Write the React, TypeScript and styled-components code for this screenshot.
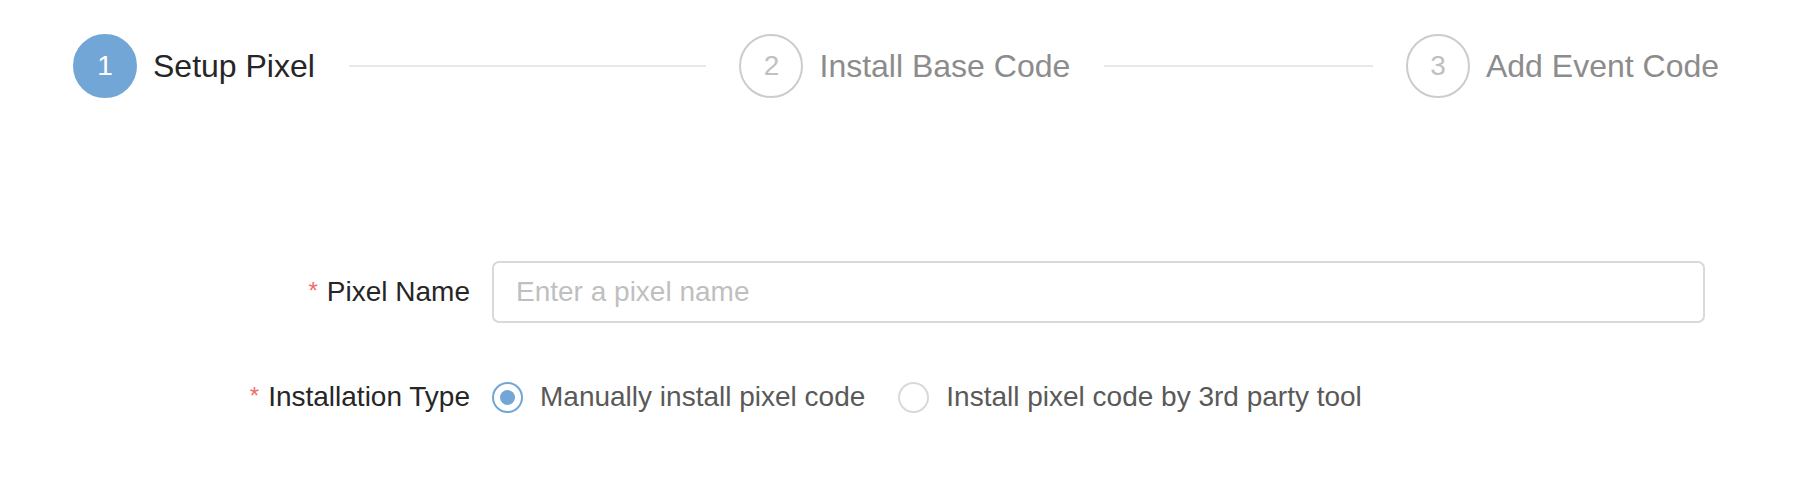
import styled, { createGlobalStyle } from "styled-components";

const GlobalStyle = createGlobalStyle`
  body {
    margin: 0;
    background: #ffffff;
    font-family: "Liberation Sans", Arial, Helvetica, sans-serif;
  }
  * {
    box-sizing: border-box;
  }
`;

const Page = styled.div`
  width: 1796px;
  height: 502px;
  background: #ffffff;
`;

const Steps = styled.div`
  display: flex;
  align-items: center;
  padding: 34px 77px 0 73px;
`;

const StepItem = styled.div<{ last?: boolean }>`
  display: flex;
  align-items: center;
  flex: ${(props) => (props.last ? "none" : "1")};
`;

const StepIcon = styled.div<{ active?: boolean }>`
  width: 64px;
  height: 64px;
  flex: none;
  border-radius: 50%;
  display: flex;
  align-items: center;
  justify-content: center;
  font-size: 28px;
  background: ${(props) => (props.active ? "#71a6d6" : "#ffffff")};
  border: 2px solid ${(props) => (props.active ? "#71a6d6" : "#cccccc")};
  color: ${(props) => (props.active ? "#ffffff" : "#c0c0c0")};
`;

const StepTitle = styled.div<{ active?: boolean }>`
  margin-left: 16px;
  font-size: 32px;
  white-space: nowrap;
  color: ${(props) => (props.active ? "#262626" : "#8c8c8c")};
`;

const StepLine = styled.div`
  flex: 1;
  height: 2px;
  margin: 0 33px 0 34px;
  background: #e8e8e8;
`;

const Form = styled.div`
  margin-top: 163px;
  display: flex;
  flex-direction: column;
  gap: 43px;
`;

const FormRow = styled.div`
  display: flex;
  align-items: center;
  min-height: 62px;
  gap: 22px;
`;

const Label = styled.div`
  width: 470px;
  text-align: right;
  font-size: 28px;
  color: #262626;
  white-space: nowrap;
`;

const Required = styled.span`
  color: #ee6b6e;
  font-size: 24px;
  margin-right: 9px;
  position: relative;
  top: -2px;
`;

const Input = styled.input`
  width: 1213px;
  height: 62px;
  border: 2px solid #d9d9d9;
  border-radius: 7px;
  padding: 0 22px;
  font-family: inherit;
  font-size: 28px;
  color: #262626;
  outline: none;

  &::placeholder {
    color: #bfbfbf;
  }
`;

const RadioGroup = styled.div`
  display: flex;
  align-items: center;
  gap: 33px;
`;

const RadioOption = styled.label`
  display: flex;
  align-items: center;
  gap: 17px;
  font-size: 28px;
  color: #595959;
  white-space: nowrap;
`;

const RadioCircle = styled.span<{ checked?: boolean }>`
  width: 31px;
  height: 31px;
  border-radius: 50%;
  border: 2px solid ${(props) => (props.checked ? "#71a6d6" : "#d9d9d9")};
  display: flex;
  align-items: center;
  justify-content: center;

  &::after {
    content: "";
    width: 15px;
    height: 15px;
    border-radius: 50%;
    background: ${(props) => (props.checked ? "#71a6d6" : "transparent")};
  }
`;

const steps = ["Setup Pixel", "Install Base Code", "Add Event Code"];

export default function App() {
  return (
    <Page>
      <GlobalStyle />
      <Steps>
        {steps.map((title, i) => {
          const last = i === steps.length - 1;
          return (
            <StepItem key={title} last={last}>
              <StepIcon active={i === 0}>{i + 1}</StepIcon>
              <StepTitle active={i === 0}>{title}</StepTitle>
              {!last && <StepLine />}
            </StepItem>
          );
        })}
      </Steps>
      <Form>
        <FormRow>
          <Label>
            <Required>*</Required>Pixel Name
          </Label>
          <Input placeholder="Enter a pixel name" />
        </FormRow>
        <FormRow>
          <Label>
            <Required>*</Required>Installation Type
          </Label>
          <RadioGroup>
            <RadioOption>
              <RadioCircle checked />
              Manually install pixel code
            </RadioOption>
            <RadioOption>
              <RadioCircle />
              Install pixel code by 3rd party tool
            </RadioOption>
          </RadioGroup>
        </FormRow>
      </Form>
    </Page>
  );
}
